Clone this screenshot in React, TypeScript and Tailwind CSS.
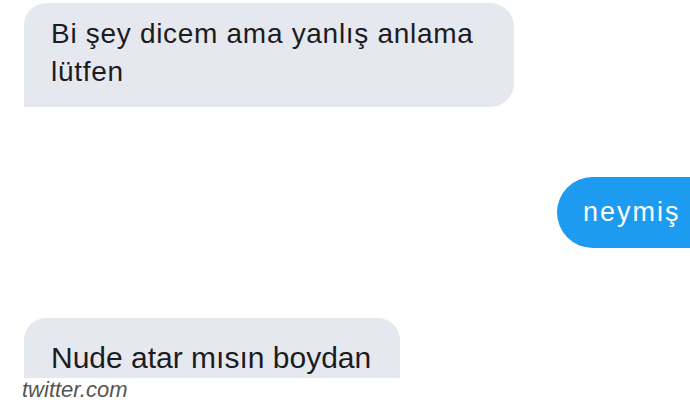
import React from "react";

export default function App() {
  return (
    <div className="w-[690px] h-[402px] bg-white overflow-hidden flex flex-col font-['Liberation_Sans',Arial,sans-serif]">
      <div className="pt-[3px] pl-[24px]">
        <div className="w-[490px] h-[104px] bg-[#e6e8f0] rounded-tl-[22px] rounded-r-[24px] pl-[27px] pt-[12px] text-[28px] leading-[38px] tracking-[0.7px] text-[#1c1c1e]">
          Bi şey dicem ama yanlış anlama
          <br />
          lütfen
        </div>
      </div>

      <div className="mt-[70px] flex justify-end">
        <div className="w-[133px] h-[71px] bg-[#1d9bf0] rounded-l-[36px] flex items-center pl-[26px] text-[27px] tracking-[2px] text-white">
          neymiş
        </div>
      </div>

      <div className="mt-[70px] pl-[24px]">
        <div className="w-[376px] h-[60px] bg-[#e6e8f0] rounded-t-[22px] pl-[27px] pt-[23px] text-[30px] leading-[34px] text-[#1c1c1e]">
          Nude atar mısın boydan
        </div>
      </div>

      <div className="pl-[22px] text-[22px] leading-[24px] italic text-[#555]">twitter.com</div>
    </div>
  );
}
